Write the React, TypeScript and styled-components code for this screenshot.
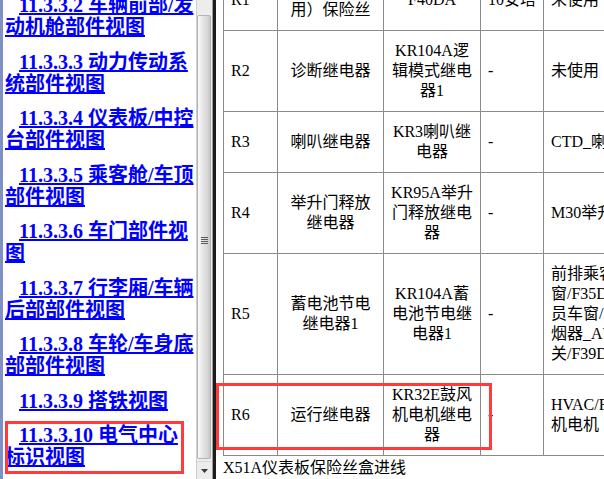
import React, { useLayoutEffect, useRef } from "react";
import styled, { createGlobalStyle, css } from "styled-components";

const GlobalStyle = createGlobalStyle`
  html, body {
    margin: 0;
    padding: 0;
    background: #ffffff;
  }
  body {
    font-family: "Liberation Serif", "Noto Sans CJK SC", serif;
  }
`;

const Page = styled.div`
  display: flex;
  width: 604px;
  height: 479px;
  overflow: hidden;
  background: #ffffff;
`;

/* ---------- left frame: table of contents ---------- */

const TocFrame = styled.div`
  display: flex;
  flex: none;
  width: 212px;
  box-sizing: border-box;
  border-left: 3px solid #7f91c4;
`;

const TocList = styled.div`
  flex: 1;
  overflow: hidden;
  padding-left: 2px;
`;

const TocEntry = styled.p<{ $marked?: boolean }>`
  position: relative;
  margin: 0 0 12.5px;
  text-indent: 14px;
  white-space: nowrap;
  font: bold 20px/22px "Liberation Serif", "Noto Sans CJK SC", serif;

  ${({ $marked }) =>
    $marked &&
    css`
      &::after {
        content: "";
        position: absolute;
        left: 0;
        top: -3px;
        width: 179px;
        height: 53px;
        box-sizing: border-box;
        border: 3px solid #ff3b3b;
      }
    `}
`;

const TocLink = styled.a`
  color: #0000ff;
  text-decoration: underline;
  cursor: pointer;
`;

const ScrollBar = styled.div`
  flex: none;
  width: 16px;
  display: flex;
  flex-direction: column;
  box-sizing: border-box;
  background: #ededed;
  border-left: 1px solid #cfcfcf;
`;

const TrackGap = styled.div<{ $h: number }>`
  flex: none;
  height: ${({ $h }) => $h}px;
`;

const Thumb = styled.div`
  flex: 1;
  margin: 0 1px 0 0;
  display: flex;
  align-items: center;
  justify-content: center;
  border: 1px solid #b4b4b4;
  border-radius: 2px;
  background: linear-gradient(to right, #fbfbfb 0%, #e8e8e8 35%, #d6d6d6 80%, #c6c6c6 100%);
`;

const Grip = styled.div`
  display: flex;
  flex-direction: column;
  gap: 1px;
  margin-top: 6px;

  span {
    display: block;
    width: 7px;
    height: 1px;
    background: #5a5a5a;
  }
`;

const ArrowButton = styled.div`
  flex: none;
  height: 17px;
  display: flex;
  align-items: center;
  justify-content: center;
  background: #ececec;
  border-top: 1px solid #d8d8d8;
`;

const Splitter = styled.div`
  flex: none;
  width: 4px;
  box-sizing: border-box;
  border-left: 1px solid #9c9c9c;
  background: #1c1c1c;
`;

/* ---------- right frame: fuse box document ---------- */

const DocFrame = styled.div`
  flex: 1;
  overflow: hidden;
  background: #ffffff;
`;

const DocBody = styled.div`
  padding: 0 0 40px 7px;
  font: 16px/20px "Liberation Serif", "Noto Sans CJK SC", serif;
  color: #000000;
`;

const SectionTitle = styled.p`
  margin: 2px 0 0;
  white-space: nowrap;
`;

const FuseTable = styled.table`
  border-collapse: collapse;
  table-layout: fixed;
  width: 470px;
  font: 16px/20px "Liberation Serif", "Noto Sans CJK SC", serif;
`;

const Cell = styled.td<{ $center?: boolean }>`
  border: 1px solid #8a8a8a;
  padding: 10px 7px;
  vertical-align: middle;
  text-align: ${({ $center }) => ($center ? "center" : "left")};
  white-space: nowrap;
`;

const HeadCell = styled(Cell).attrs({ as: "th" })`
  font-weight: bold;
`;

const MarkedCell = styled(Cell)`
  position: relative;
`;

const RowMark = styled.span`
  position: absolute;
  left: -8px;
  top: 8px;
  width: 276px;
  height: 67px;
  box-sizing: border-box;
  border: 3px solid #ff3b3b;
  pointer-events: none;
`;

type Entry = { lines: string[]; marked?: boolean; anchor?: boolean };

const tocEntries: Entry[] = [
  { lines: ["11.3.3 部件位置视图"] },
  { lines: ["11.3.3.1 车辆外部部", "件视图"] },
  { lines: ["11.3.3.2 车辆前部/发", "动机舱部件视图"], anchor: true },
  { lines: ["11.3.3.3 动力传动系", "统部件视图"] },
  { lines: ["11.3.3.4 仪表板/中控", "台部件视图"] },
  { lines: ["11.3.3.5 乘客舱/车顶", "部件视图"] },
  { lines: ["11.3.3.6 车门部件视", "图"] },
  { lines: ["11.3.3.7 行李厢/车辆", "后部部件视图"] },
  { lines: ["11.3.3.8 车轮/车身底", "部部件视图"] },
  { lines: ["11.3.3.9 搭铁视图"] },
  { lines: ["11.3.3.10 电气中心", "标识视图"], marked: true },
  { lines: ["11.3.4 电气中心视图"] },
];

type Row = {
  id: string;
  name: string[];
  part: string[];
  rating: string;
  circuit: string[];
  anchor?: boolean;
  marked?: boolean;
};

const fuseRows: Row[] = [
  { id: "F39DA", name: ["点烟器/辅助", "电源插座"], part: ["F39DA"], rating: "20安培", circuit: ["点烟器_AUX"] },
  { id: "R1", name: ["备用（未使", "用）保险丝"], part: ["F40DA"], rating: "10安培", circuit: ["未使用"], anchor: true },
  { id: "R2", name: ["诊断继电器"], part: ["KR104A逻", "辑模式继电", "器1"], rating: "-", circuit: ["未使用"] },
  { id: "R3", name: ["喇叭继电器"], part: ["KR3喇叭继", "电器"], rating: "-", circuit: ["CTD_喇叭"] },
  { id: "R4", name: ["举升门释放", "继电器"], part: ["KR95A举升", "门释放继电", "器"], rating: "-", circuit: ["M30举升门"] },
  {
    id: "R5",
    name: ["蓄电池节电", "继电器1"],
    part: ["KR104A蓄", "电池节电继", "电器1"],
    rating: "-",
    circuit: ["前排乘客车", "窗/F35DA驾驶", "员车窗/F36DA", "烟器_AUX插座开", "关/F39DA"],
  },
  { id: "R6", name: ["运行继电器"], part: ["KR32E鼓风", "机电机继电", "器"], rating: "-", circuit: ["HVAC/FAN鼓风", "机电机"], marked: true },
];

const Lines: React.FC<{ lines: string[] }> = ({ lines }) => (
  <>
    {lines.map((line, i) => (
      <React.Fragment key={i}>
        {i > 0 && <br />}
        {line}
      </React.Fragment>
    ))}
  </>
);

const App: React.FC = () => {
  const tocRef = useRef<HTMLDivElement>(null);
  const tocAnchor = useRef<HTMLParagraphElement>(null);
  const docRef = useRef<HTMLDivElement>(null);
  const docAnchor = useRef<HTMLTableRowElement>(null);

  useLayoutEffect(() => {
    if (tocRef.current && tocAnchor.current) {
      const top = tocAnchor.current.getBoundingClientRect().top - tocRef.current.getBoundingClientRect().top;
      tocRef.current.scrollTop = top + 6;
    }
    if (docRef.current && docAnchor.current) {
      const top = docAnchor.current.getBoundingClientRect().top - docRef.current.getBoundingClientRect().top;
      docRef.current.scrollTop = top + 30;
    }
  }, []);

  return (
    <>
      <GlobalStyle />
      <Page>
        <TocFrame>
          <TocList ref={tocRef}>
            {tocEntries.map((entry, idx) => (
              <TocEntry key={idx} $marked={entry.marked} ref={entry.anchor ? tocAnchor : undefined}>
                <TocLink>
                  <Lines lines={entry.lines} />
                </TocLink>
              </TocEntry>
            ))}
          </TocList>
          <ScrollBar>
            <TrackGap $h={15} />
            <Thumb>
              <Grip>
                <span />
                <span />
                <span />
                <span />
              </Grip>
            </Thumb>
            <TrackGap $h={2} />
            <ArrowButton>
              <svg width="7" height="4" viewBox="0 0 7 4">
                <path d="M0 0 H7 L3.5 4 Z" fill="#3a3a3a" />
              </svg>
            </ArrowButton>
          </ScrollBar>
        </TocFrame>

        <Splitter />

        <DocFrame ref={docRef}>
          <DocBody>
            <SectionTitle>X50A仪表板保险丝盒</SectionTitle>
            <FuseTable>
              <colgroup>
                <col style={{ width: 54 }} />
                <col style={{ width: 106 }} />
                <col style={{ width: 97 }} />
                <col style={{ width: 63 }} />
                <col style={{ width: 150 }} />
              </colgroup>
              <thead>
                <tr>
                  <HeadCell>编号</HeadCell>
                  <HeadCell $center>名称</HeadCell>
                  <HeadCell $center>部件</HeadCell>
                  <HeadCell>额定</HeadCell>
                  <HeadCell>电路</HeadCell>
                </tr>
              </thead>
              <tbody>
                {fuseRows.map((row) => (
                  <tr key={row.id} ref={row.anchor ? docAnchor : undefined}>
                    {row.marked ? (
                      <MarkedCell>
                        {row.id}
                        <RowMark />
                      </MarkedCell>
                    ) : (
                      <Cell>{row.id}</Cell>
                    )}
                    <Cell $center>
                      <Lines lines={row.name} />
                    </Cell>
                    <Cell $center>
                      <Lines lines={row.part} />
                    </Cell>
                    <Cell>{row.rating}</Cell>
                    <Cell>
                      <Lines lines={row.circuit} />
                    </Cell>
                  </tr>
                ))}
              </tbody>
            </FuseTable>
            <SectionTitle>X51A仪表板保险丝盒进线</SectionTitle>
            <SectionTitle>连接器零件信息</SectionTitle>
          </DocBody>
        </DocFrame>
      </Page>
    </>
  );
};

export default App;
